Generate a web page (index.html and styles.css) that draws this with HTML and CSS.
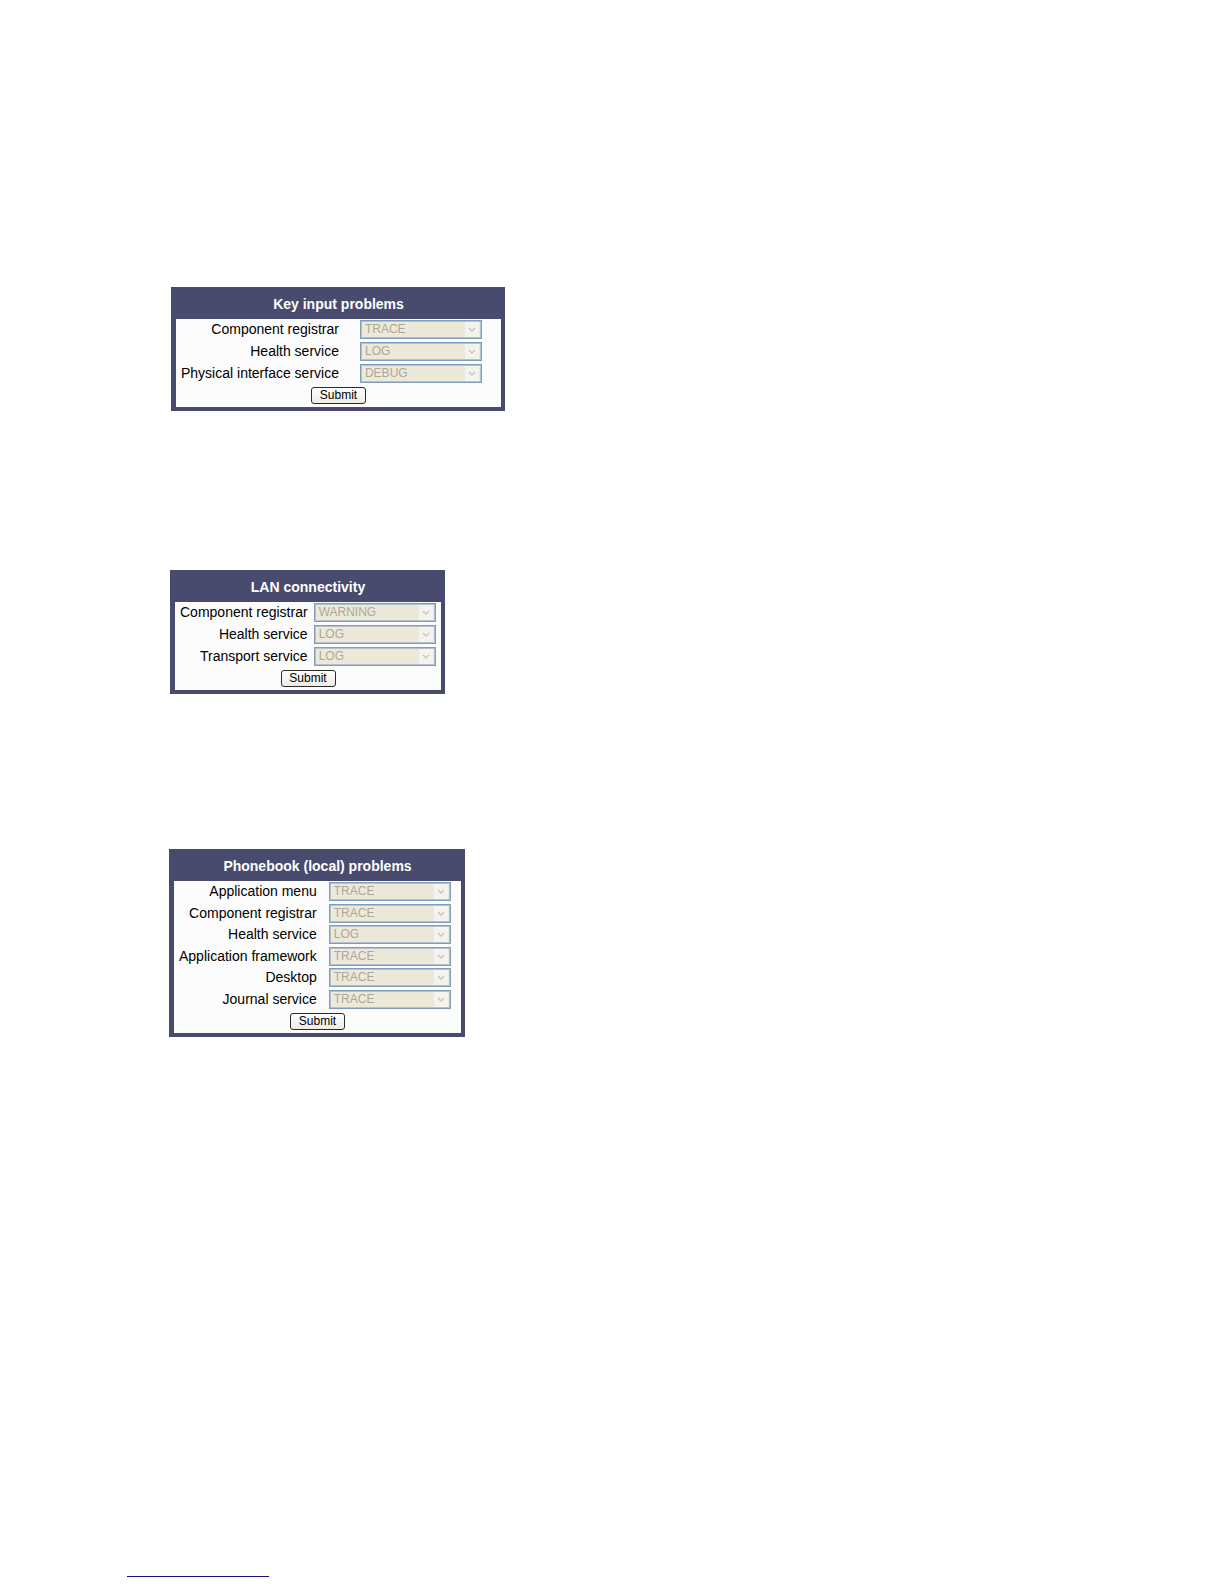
FILE: index.html
```html
<!DOCTYPE html>
<html lang="en">
<head>
<meta charset="utf-8">
<title>Diagnostics</title>
<link rel="stylesheet" href="styles.css">
</head>
<body>
<div class="page">
  <div class="panels">
    <section class="panel panel-key">
      <h2 class="panel-title">Key input problems</h2>
      <div class="panel-body">
        <div class="form-grid">
          <span class="field-label">Component registrar</span>
          <div class="combo"><span class="combo-value">TRACE</span><span class="combo-arrow"><svg width="8" height="5" viewBox="0 0 8 5"><path d="M1 1 L4 4 L7 1" fill="none" stroke="#c6c6c2" stroke-width="1.4"/></svg></span></div>
          <span class="field-label">Health service</span>
          <div class="combo"><span class="combo-value">LOG</span><span class="combo-arrow"><svg width="8" height="5" viewBox="0 0 8 5"><path d="M1 1 L4 4 L7 1" fill="none" stroke="#c6c6c2" stroke-width="1.4"/></svg></span></div>
          <span class="field-label">Physical interface service</span>
          <div class="combo"><span class="combo-value">DEBUG</span><span class="combo-arrow"><svg width="8" height="5" viewBox="0 0 8 5"><path d="M1 1 L4 4 L7 1" fill="none" stroke="#c6c6c2" stroke-width="1.4"/></svg></span></div>
        </div>
        <div class="actions"><button class="submit" type="button">Submit</button></div>
      </div>
    </section>

    <section class="panel panel-lan">
      <h2 class="panel-title">LAN connectivity</h2>
      <div class="panel-body">
        <div class="form-grid">
          <span class="field-label">Component registrar</span>
          <div class="combo"><span class="combo-value">WARNING</span><span class="combo-arrow"><svg width="8" height="5" viewBox="0 0 8 5"><path d="M1 1 L4 4 L7 1" fill="none" stroke="#c6c6c2" stroke-width="1.4"/></svg></span></div>
          <span class="field-label">Health service</span>
          <div class="combo"><span class="combo-value">LOG</span><span class="combo-arrow"><svg width="8" height="5" viewBox="0 0 8 5"><path d="M1 1 L4 4 L7 1" fill="none" stroke="#c6c6c2" stroke-width="1.4"/></svg></span></div>
          <span class="field-label">Transport service</span>
          <div class="combo"><span class="combo-value">LOG</span><span class="combo-arrow"><svg width="8" height="5" viewBox="0 0 8 5"><path d="M1 1 L4 4 L7 1" fill="none" stroke="#c6c6c2" stroke-width="1.4"/></svg></span></div>
        </div>
        <div class="actions"><button class="submit" type="button">Submit</button></div>
      </div>
    </section>

    <section class="panel panel-phone">
      <h2 class="panel-title">Phonebook (local) problems</h2>
      <div class="panel-body">
        <div class="form-grid">
          <span class="field-label">Application menu</span>
          <div class="combo"><span class="combo-value">TRACE</span><span class="combo-arrow"><svg width="8" height="5" viewBox="0 0 8 5"><path d="M1 1 L4 4 L7 1" fill="none" stroke="#c6c6c2" stroke-width="1.4"/></svg></span></div>
          <span class="field-label">Component registrar</span>
          <div class="combo"><span class="combo-value">TRACE</span><span class="combo-arrow"><svg width="8" height="5" viewBox="0 0 8 5"><path d="M1 1 L4 4 L7 1" fill="none" stroke="#c6c6c2" stroke-width="1.4"/></svg></span></div>
          <span class="field-label">Health service</span>
          <div class="combo"><span class="combo-value">LOG</span><span class="combo-arrow"><svg width="8" height="5" viewBox="0 0 8 5"><path d="M1 1 L4 4 L7 1" fill="none" stroke="#c6c6c2" stroke-width="1.4"/></svg></span></div>
          <span class="field-label">Application framework</span>
          <div class="combo"><span class="combo-value">TRACE</span><span class="combo-arrow"><svg width="8" height="5" viewBox="0 0 8 5"><path d="M1 1 L4 4 L7 1" fill="none" stroke="#c6c6c2" stroke-width="1.4"/></svg></span></div>
          <span class="field-label">Desktop</span>
          <div class="combo"><span class="combo-value">TRACE</span><span class="combo-arrow"><svg width="8" height="5" viewBox="0 0 8 5"><path d="M1 1 L4 4 L7 1" fill="none" stroke="#c6c6c2" stroke-width="1.4"/></svg></span></div>
          <span class="field-label">Journal service</span>
          <div class="combo"><span class="combo-value">TRACE</span><span class="combo-arrow"><svg width="8" height="5" viewBox="0 0 8 5"><path d="M1 1 L4 4 L7 1" fill="none" stroke="#c6c6c2" stroke-width="1.4"/></svg></span></div>
        </div>
        <div class="actions"><button class="submit" type="button">Submit</button></div>
      </div>
    </section>
  </div>

  <div class="footnote">
    <div class="footnote-rule"></div>
  </div>
</div>
</body>
</html>
```

FILE: styles.css
```css
html, body {
  margin: 0;
  padding: 0;
  background: #ffffff;
}

body {
  font-family: "Liberation Sans", Arial, sans-serif;
  color: #000000;
}

.page {
  width: 1224px;
  height: 1584px;
  box-sizing: border-box;
  padding-top: 287px;
  display: flex;
  flex-direction: column;
}

.panels {
  display: flex;
  flex-direction: column;
  align-items: flex-start;
  padding-left: 170px;
}

.panel {
  box-sizing: border-box;
  background: #484a6e;
  padding: 0 4px 4px 5px;
}

.panel-key {
  width: 334px;
  margin-left: 1px;
}

.panel-lan {
  width: 275px;
  margin-top: 159px;
}

.panel-phone {
  width: 296px;
  margin-top: 155px;
  margin-left: -1px;
}

.panel-title {
  margin: 0;
  height: 32px;
  box-sizing: border-box;
  padding-top: 3px;
  line-height: 29px;
  font-size: 14px;
  font-weight: bold;
  color: #ffffff;
  text-align: center;
}

.panel-body {
  background: #fcfcfc;
  padding: 1px 0 3px;
}

.form-grid {
  display: grid;
  grid-template-columns: auto 122px;
  justify-content: start;
  align-items: center;
  row-gap: 3px;
  padding-left: 5px;
}

.panel-key .form-grid {
  column-gap: 21px;
}

.panel-lan .form-grid {
  column-gap: 6px;
}

.panel-phone .form-grid {
  column-gap: 12px;
  row-gap: 2.6px;
}

.field-label {
  font-size: 14px;
  text-align: right;
  white-space: nowrap;
  line-height: 19px;
}

.combo {
  height: 19px;
  box-sizing: border-box;
  border: 1px solid #7f9db9;
  box-shadow: inset 0 0 0 1px #b4c1d3;
  background: #ece9d8;
  display: flex;
  align-items: center;
  justify-content: space-between;
  padding: 0 2px 0 4px;
  font-size: 12px;
  color: #aca899;
}

.combo-value {
  line-height: 17px;
}

.combo-arrow {
  width: 14px;
  height: 15px;
  background: #f4f3ee;
  display: flex;
  align-items: center;
  justify-content: center;
}

.actions {
  display: flex;
  justify-content: center;
  margin-top: 4px;
}

.submit {
  width: 55px;
  height: 17px;
  box-sizing: border-box;
  padding: 0;
  border: 1px solid #2a2a2a;
  border-radius: 3px;
  background: linear-gradient(#ffffff, #ecebe4);
  font-family: "Liberation Sans", Arial, sans-serif;
  font-size: 12px;
  line-height: 15px;
  color: #000000;
}

.footnote {
  padding-left: 127px;
  margin-top: 539px;
}

.footnote-rule {
  width: 142px;
  height: 1px;
  background: #14147a;
}
```
